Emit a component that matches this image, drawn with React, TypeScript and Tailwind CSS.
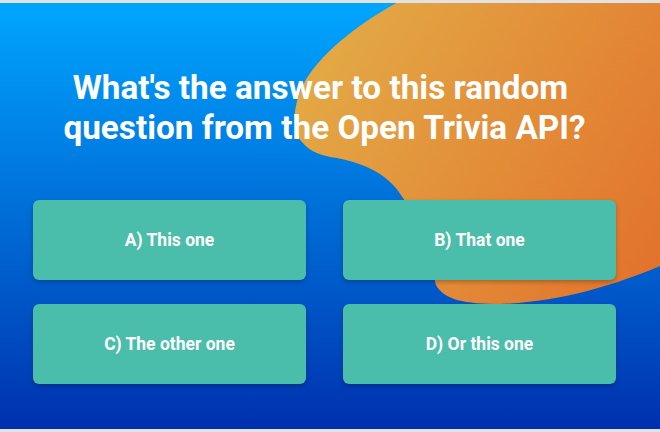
const answers = ["A) This one", "B) That one", "C) The other one", "D) Or this one"];

function Blob() {
  return (
    <svg
      className="absolute inset-0 h-full w-full"
      viewBox="0 3 660 426"
      preserveAspectRatio="none"
    >
      <defs>
        <linearGradient id="blob" x1="300" y1="40" x2="660" y2="260" gradientUnits="userSpaceOnUse">
          <stop offset="0" stopColor="#e3ac46" />
          <stop offset="1" stopColor="#e2732d" />
        </linearGradient>
      </defs>
      <path
        d="M 402 0 C 360 22, 318 55, 303 85 C 292 108, 292 132, 302 142 C 310 152, 322 156, 337 158 C 358 162, 378 170, 390 182 C 410 200, 424 240, 436 285 C 444 300, 465 304, 500 304 C 560 302, 615 285, 660 266 L 660 0 Z"
        fill="url(#blob)"
      />
    </svg>
  );
}

export default function App() {
  return (
    <div
      className="h-[432px] w-[660px] bg-[#e2e2e2] py-[3px]"
      style={{ fontFamily: "Roboto, 'Liberation Sans', sans-serif" }}
    >
      <div className="relative h-full overflow-hidden bg-gradient-to-b from-[#00a6ff] to-[#002fae]">
        <Blob />
        <div className="relative flex flex-col pl-[33px] pr-[44px] pt-[65px]">
          <h1 className="text-center text-[33.3px] font-bold leading-[40px] text-white">
            What's the answer to this random{"\u00a0"}
            <br />
            question from the Open Trivia API?
          </h1>
          <div className="mt-[52px] grid grid-cols-2 gap-x-[37px] gap-y-[24px]">
            {answers.map((answer) => (
              <button
                key={answer}
                type="button"
                className="flex h-[80px] items-center justify-center rounded-md bg-[#4bbdab] text-[17.5px] font-bold text-white shadow-[0_2px_4px_rgba(0,0,0,0.25)]"
              >
                {answer}
              </button>
            ))}
          </div>
        </div>
      </div>
    </div>
  );
}
